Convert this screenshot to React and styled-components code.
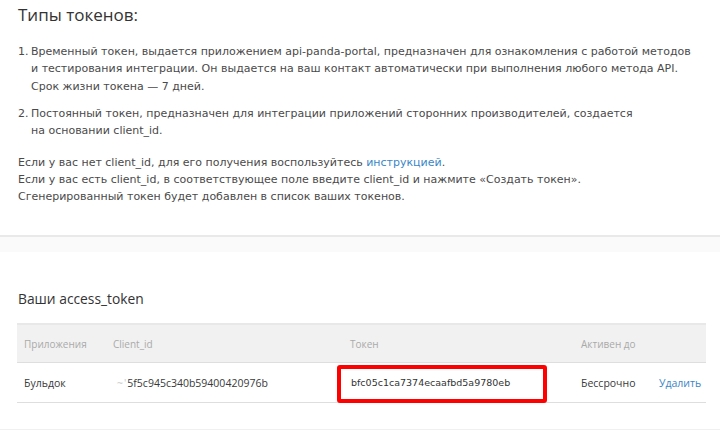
import React from "react";
import styled, { createGlobalStyle } from "styled-components";

const Global = createGlobalStyle`
  html, body { margin: 0; padding: 0; background: #fff; }
  body { font-family: "DejaVu Sans", Verdana, sans-serif; color: #444; }
`;

const Page = styled.div`
  width: 720px;
  height: 430px;
  overflow: hidden;
  display: flex;
  flex-direction: column;
`;

const Intro = styled.section`
  padding: 4px 18px 0 18px;
  height: 235px;
  box-sizing: border-box;
`;

const Title = styled.h2`
  margin: 0;
  font-family: "Open Sans", sans-serif;
  font-weight: 400;
  font-size: 17px;
  line-height: 22px;
  color: #333;
`;

const List = styled.ol`
  margin: 17px 0 0 0;
  padding: 0;
  list-style: none;
  display: flex;
  flex-direction: column;
  gap: 10px;
`;

const Item = styled.li`
  display: flex;
  font-size: 11px;
  line-height: 17.3px;
  color: #4a4a4a;
`;

const Num = styled.span`
  width: 13px;
  flex: none;
`;

const Para = styled.p`
  margin: 15px 0 0 0;
  font-size: 11px;
  line-height: 17px;
  color: #4a4a4a;
`;

const Link = styled.a`
  color: #3a86c8;
  text-decoration: none;
`;

const Divider = styled.div`
  border-top: 2px solid #e9e9e9;
  height: 15px;
  background: #fafafa;
  flex: none;
`;

const Tokens = styled.section`
  padding: 0 14px 0 17px;
  flex: 1;
  border-bottom: 1px solid #f0f0f0;
  display: flex;
  flex-direction: column;
`;

const SubTitle = styled.h3`
  margin: 37px 0 0 1px;
  font-family: "Open Sans", sans-serif;
  font-weight: 400;
  font-size: 13.8px;
  line-height: 20px;
  color: #333;
`;

const Table = styled.div`
  margin-top: 14px;
  display: grid;
  grid-template-columns: 89px 226px 245px 82px 1fr;
  font-family: "Open Sans", sans-serif;
`;

const HeadCell = styled.div`
  background: #f1f1f1;
  border-top: 2px solid #e8e8e8;
  border-bottom: 1px solid #dedede;
  height: 37px;
  display: flex;
  align-items: center;
  padding-left: ${(p) => p.$pl ?? 7}px;
  color: #aaa;
  font-size: 10px;
`;

const Cell = styled.div`
  height: 39px;
  border-bottom: 1px solid #dedede;
  display: flex;
  align-items: center;
  padding-left: ${(p) => p.$pl ?? 7}px;
  color: #3a3a3a;
  font-size: 10.5px;
  position: relative;
`;

const Faded = styled.span`
  color: #c8c8c8;
  letter-spacing: 1px;
`;

const Highlight = styled.div`
  position: absolute;
  left: 5px;
  top: 2px;
  width: 210px;
  height: 38px;
  border: 4px solid #ff0000;
  border-radius: 3px;
  box-sizing: border-box;
`;

const TokenText = styled.span`
  position: relative;
  padding-left: 19px;
  font-family: "DejaVu Sans", sans-serif;
  font-size: 9.5px;
  color: #333;
`;

const Del = styled.a`
  color: #3a86c8;
  text-decoration: none;
`;

export default function App() {
  return (
    <Page>
      <Global />
      <Intro>
        <Title>Типы токенов:</Title>
        <List>
          <Item>
            <Num>1.</Num>
            <span>
              Временный токен, выдается приложением api-panda-portal, предназначен для ознакомления с работой методов
              <br />
              и тестирования интеграции. Он выдается на ваш контакт автоматически при выполнения любого метода API.
              <br />
              Срок жизни токена — 7 дней.
            </span>
          </Item>
          <Item>
            <Num>2.</Num>
            <span>
              Постоянный токен, предназначен для интеграции приложений сторонних производителей, создается
              <br />
              на основании client_id.
            </span>
          </Item>
        </List>
        <Para>
          Если у вас нет client_id, для его получения воспользуйтесь <Link href="#">инструкцией</Link>.
          <br />
          Если у вас есть client_id, в соответствующее поле введите client_id и нажмите «Создать токен».
          <br />
          Сгенерированный токен будет добавлен в список ваших токенов.
        </Para>
      </Intro>
      <Divider />
      <Tokens>
        <SubTitle>Ваши access_token</SubTitle>
        <Table>
          <HeadCell>Приложения</HeadCell>
          <HeadCell>Client_id</HeadCell>
          <HeadCell $pl={18}>Токен</HeadCell>
          <HeadCell $pl={4}>Активен до</HeadCell>
          <HeadCell />
          <Cell>Бульдок</Cell>
          <Cell $pl={11}>
            <Faded>~' </Faded>5f5c945c340b59400420976b
          </Cell>
          <Cell $pl={0}>
            <Highlight />
            <TokenText>bfc05c1ca7374ecaafbd5a9780eb</TokenText>
          </Cell>
          <Cell $pl={4}>Бессрочно</Cell>
          <Cell $pl={0}>
            <Del href="#">Удалить</Del>
          </Cell>
        </Table>
      </Tokens>
    </Page>
  );
}
